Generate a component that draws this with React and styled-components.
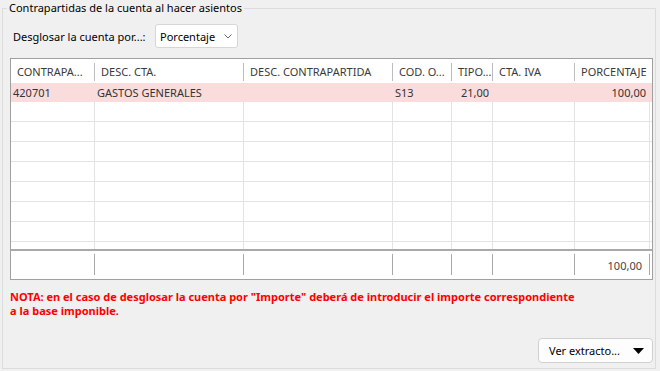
import React from 'react';
import styled, { createGlobalStyle } from 'styled-components';

const GlobalStyle = createGlobalStyle`
  html, body {
    margin: 0;
    padding: 0;
    background: #f0f0f0;
  }
  body {
    font-family: "Noto Sans", "Liberation Sans", sans-serif;
    font-size: 11px;
    color: #000;
  }
`;

const columns = [
  { key: 'cta', label: 'CONTRAPA...', width: 84 },
  { key: 'desc', label: 'DESC. CTA.', width: 149 },
  { key: 'descContra', label: 'DESC. CONTRAPARTIDA', width: 149 },
  { key: 'cod', label: 'COD. O...', width: 59 },
  { key: 'tipo', label: 'TIPO...', width: 41, right: true },
  { key: 'ctaIva', label: 'CTA. IVA', width: 82 },
  { key: 'pct', label: 'PORCENTAJE', width: 75, right: true },
];

const gridCols = columns.map((c) => `${c.width}px`).join(' ');

const rows = [
  { cta: '420701', desc: 'GASTOS GENERALES', descContra: '', cod: 'S13', tipo: '21,00', ctaIva: '', pct: '100,00', selected: true },
  ...Array.from({ length: 8 }, () => ({})),
];

const Group = styled.fieldset`
  box-sizing: border-box;
  margin: 0 4px 0 2px;
  padding: 0 2px 5px 7px;
  height: 369px;
  border: 1px solid #dcdcdc;
  border-radius: 0;
  display: flex;
  flex-direction: column;
  min-width: 0;
`;

const Legend = styled.legend`
  margin-left: -3px;
  padding: 0 2px;
  font-size: 11px;
  line-height: 16px;
  color: #000;
`;

const Toolbar = styled.div`
  display: flex;
  align-items: center;
  margin-top: 8px;
  padding-left: 3px;
  gap: 6px;
`;

const Label = styled.span`
  width: 136px;
  white-space: nowrap;
`;

const Select = styled.div`
  box-sizing: border-box;
  width: 83px;
  height: 24px;
  background: #fff;
  border: 1px solid #d6d6d6;
  border-radius: 3px;
  display: flex;
  align-items: center;
  justify-content: space-between;
  padding: 0 5px 0 4px;
`;

const Table = styled.div`
  box-sizing: border-box;
  margin-top: 10px;
  width: 643px;
  border: 1px solid #a0a0a0;
  background: #fff;
`;

const Row = styled.div`
  display: grid;
  grid-template-columns: ${gridCols};
  height: ${({ $h }) => $h}px;
  background: ${({ $selected }) => ($selected ? '#fadcdc' : 'transparent')};
  border-bottom: ${({ $line }) => ($line ? '1px solid #e3e3e3' : 'none')};
`;

const HeadCell = styled.div`
  position: relative;
  display: flex;
  align-items: center;
  padding-left: 6px;
  color: #3a3a3a;
  white-space: nowrap;
  overflow: hidden;
  &::after {
    content: '';
    position: absolute;
    right: 0;
    top: 4px;
    bottom: 2px;
    width: 1px;
    background: ${({ $last }) => ($last ? 'transparent' : '#bdbdbd')};
  }
`;

const Body = styled.div`
  height: 166px;
  overflow: hidden;
  border-bottom: 2px solid #a9a9a9;
`;

const Cell = styled.div`
  box-sizing: border-box;
  display: flex;
  align-items: center;
  justify-content: ${({ $right }) => ($right ? 'flex-end' : 'flex-start')};
  padding: 0 3px 0 2px;
  color: #333;
  white-space: nowrap;
  overflow: hidden;
  border-right: 1px solid ${({ $selected }) => ($selected ? '#fadcdc' : '#e3e3e3')};
`;

const FootCell = styled.div`
  position: relative;
  display: flex;
  align-items: center;
  justify-content: flex-end;
  padding-right: 8px;
  color: #444;
  &::after {
    content: '';
    position: absolute;
    right: 0;
    top: 3px;
    bottom: 4px;
    width: 1px;
    background: #a8a8a8;
  }
`;

const Note = styled.p`
  margin: 10px 0 0;
  color: #ff0000;
  font-weight: bold;
  font-size: 11px;
  line-height: 14px;
`;

const Actions = styled.div`
  margin-top: auto;
  display: flex;
  justify-content: flex-end;
`;

const MenuButton = styled.button`
  box-sizing: border-box;
  width: 115px;
  height: 25px;
  background: #fdfdfd;
  border: 1px solid #d0d0d0;
  border-radius: 4px;
  display: flex;
  align-items: center;
  justify-content: space-between;
  padding: 0 8px 0 10px;
  font-family: inherit;
  font-size: 11px;
  color: #000;
`;

const Chevron = () => (
  <svg width="8" height="5" viewBox="0 0 8 5">
    <path d="M0.5 0.5 L4 4 L7.5 0.5" fill="none" stroke="#666" strokeWidth="1" />
  </svg>
);

const Caret = () => (
  <svg width="11" height="6" viewBox="0 0 11 6">
    <path d="M0 0 H11 L5.5 6 Z" fill="#000" />
  </svg>
);

export default function App() {
  return (
    <>
      <GlobalStyle />
      <Group>
        <Legend>Contrapartidas de la cuenta al hacer asientos</Legend>
        <Toolbar>
          <Label>Desglosar la cuenta por...:</Label>
          <Select>
            <span>Porcentaje</span>
            <Chevron />
          </Select>
        </Toolbar>
        <Table>
          <Row $h={24}>
            {columns.map((c, i) => (
              <HeadCell key={c.key} $last={i === columns.length - 1}>
                {c.label}
              </HeadCell>
            ))}
          </Row>
          <Body>
            {rows.map((r, ri) => (
              <Row key={ri} $h={19} $line={!r.selected} $selected={r.selected}>
                {columns.map((c) => (
                  <Cell key={c.key} $right={c.right} $selected={r.selected}>
                    {r[c.key]}
                  </Cell>
                ))}
              </Row>
            ))}
          </Body>
          <Row $h={28}>
            {columns.map((c) => (
              <FootCell key={c.key}>{c.key === 'pct' ? '100,00' : ''}</FootCell>
            ))}
          </Row>
        </Table>
        <Note>
          NOTA: en el caso de desglosar la cuenta por "Importe" deberá de introducir el importe correspondiente
          <br />
          a la base imponible.
        </Note>
        <Actions>
          <MenuButton>
            <span>Ver extracto...</span>
            <Caret />
          </MenuButton>
        </Actions>
      </Group>
    </>
  );
}
